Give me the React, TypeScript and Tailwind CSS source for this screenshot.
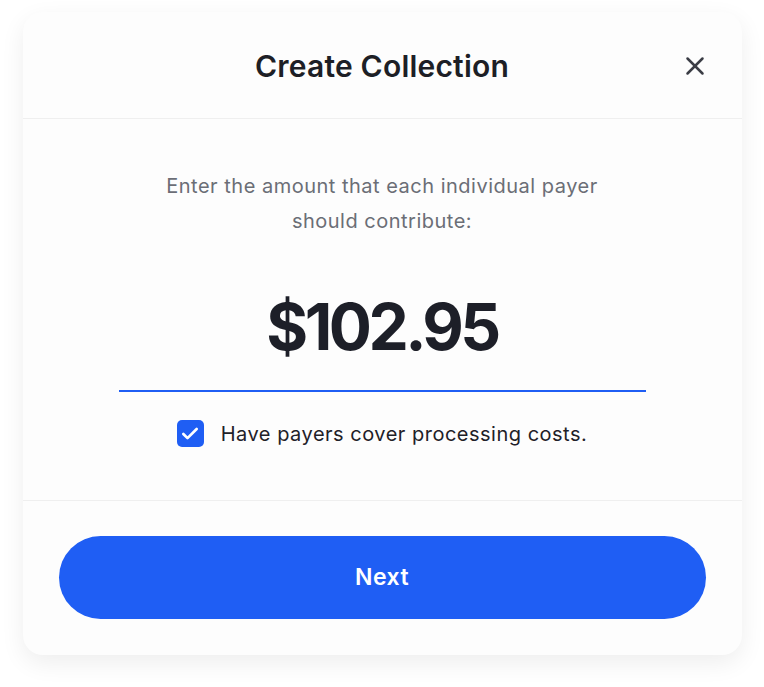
import { X, Check } from "lucide-react";

export default function App() {
  return (
    <div className="min-h-screen bg-white pt-[12px]" style={{ fontFamily: "Inter, 'Noto Sans', sans-serif" }}>
      <div className="mx-auto w-[719px] rounded-[20px] bg-[#fdfdfd] shadow-[0_8px_24px_rgba(0,0,0,0.07)]">
        <header className="relative flex h-[107px] items-center justify-center border-b border-[#efefef] pt-[3px]">
          <h1 className="text-[30px] font-semibold tracking-[0.2px] text-[#1d1f26]">Create Collection</h1>
          <button className="absolute right-[32px] top-[39px] text-[#3b3d45]">
            <X size={30} strokeWidth={2} />
          </button>
        </header>

        <main className="flex flex-col items-center border-b border-[#efefef] pb-[51px] pt-[50px]">
          <p className="w-[450px] text-center text-[20px] leading-[35px] tracking-[0.5px] text-[#6b6e76]">
            Enter the amount that each individual payer should contribute:
          </p>
          <div className="mt-[48px] flex h-[103px] w-[527px] justify-center">
            <span className="text-[64px] font-bold leading-[80px] tracking-[-3.5px] text-[#1d1f28]">$102.95</span>
          </div>
          <div className="h-[1.5px] w-[527px] bg-[#1f5ef4]" />
          <label className="mt-[27px] flex items-center gap-[17px]">
            <span className="flex h-[27px] w-[27px] items-center justify-center rounded-[5px] bg-[#1f5ef4] text-white">
              <Check size={20} strokeWidth={3.2} />
            </span>
            <span className="text-[20px] tracking-[0.5px] text-[#1f2128]">Have payers cover processing costs.</span>
          </label>
        </main>

        <footer className="px-[36px] pb-[36px] pt-[35px]">
          <button className="flex h-[83px] w-full items-center justify-center rounded-full bg-[#1f5ef4] text-[23px] font-semibold tracking-[0.5px] text-white">
            Next
          </button>
        </footer>
      </div>
    </div>
  );
}
